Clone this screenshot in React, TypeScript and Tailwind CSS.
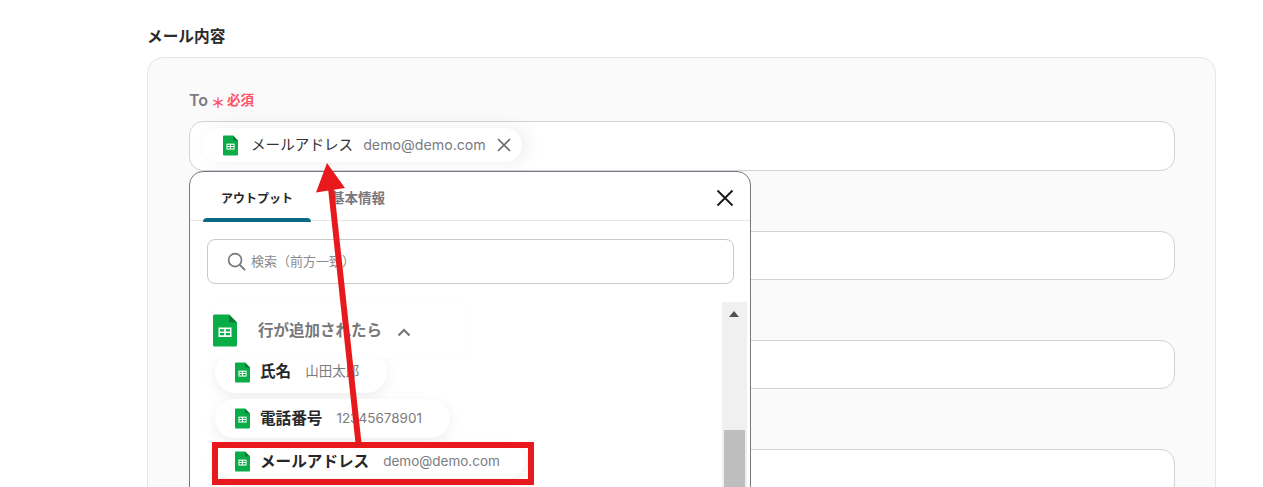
import React from "react";

const FONT = "font-['Inter','Noto_Sans_CJK_JP',sans-serif]";

function Sheet({ className }: { className: string }) {
  return (
    <svg viewBox="0 0 24 32" className={className} aria-hidden="true">
      <path d="M1.5 0H16l8 8v22.5a1.5 1.5 0 0 1-1.5 1.5h-21A1.5 1.5 0 0 1 0 30.500V1.500A1.500 1.500 0 0 1 1.500 0Z" fill="#0AAC48" />
      <path d="M16 0l8 8h-6.500A1.500 1.500 0 0 1 16 6.500Z" fill="#0A7A3A" />
      <path d="M5.500 13h13v9.500h-13Z" fill="#fff" />
      <path d="M7 14.800h4.200v2.100H7ZM12.800 14.800H17v2.100h-4.200ZM7 18.500h4.200v2.300H7ZM12.800 18.500H17v2.300h-4.200Z" fill="#0AAC48" />
    </svg>
  );
}

function Field({ className = "" }: { className?: string }) {
  return <div className={`rounded-[14px] border border-[#cfd3dc] bg-white ${className}`} />;
}

function Pill({ name, value, className }: { name: string; value: string; className: string }) {
  return (
    <div className={`flex items-center rounded-full bg-white pl-5 shadow-[0_4px_14px_rgba(0,0,0,0.07)] ${className}`}>
      <Sheet className="h-[21px] w-[15px] shrink-0" />
      <span className="ml-[10px] text-[15.600px] font-bold leading-none text-[#27272a]">{name}</span>
      <span className="ml-[14px] text-[13.500px] leading-none text-[#7b7b80]">{value}</span>
    </div>
  );
}

export default function App() {
  return (
    <div className={`relative h-[487px] w-[1263px] overflow-hidden bg-white ${FONT}`}>
      <div className="pl-[147px] pr-[47px] pt-[26px]">
        <h2 className="h-[31px] text-[15.700px] font-semibold leading-[22px] text-[#2b2b2b]">メール内容</h2>
        <section className="h-[500px] rounded-t-[16px] border border-[#e5e6e9] bg-[#fafafb] pl-[41px] pr-[40px] pt-[31px]">
          <div className="flex h-[22px] items-center">
            <span className="text-[16px] font-semibold text-[#7c7c80]">To</span>
            <span className="ml-[3px] mt-[5px] text-[14px] font-bold leading-none text-[#ff5268]">＊</span>
            <span className="ml-[2px] text-[13.500px] font-bold text-[#ff5268]">必須</span>
          </div>
          <div className="relative mt-[10px] flex h-[50px] items-center rounded-[14px] border border-[#cfd3dc] bg-white pb-[2px] pl-[12px]">
            <div className="flex h-[34px] w-[320px] items-center rounded-full bg-white pl-[21px] shadow-[6px_0_18px_rgba(0,0,0,0.07)]">
              <Sheet className="h-[21px] w-[15px] shrink-0" />
              <span className="ml-[13px] text-[14.600px] leading-none text-[#333336]">メールアドレス</span>
              <span className="ml-[10px] text-[14.200px] leading-none text-[#7b7b80]">demo@demo.com</span>
              <svg viewBox="0 0 14 14" className="ml-[11px] h-[14px] w-[14px]" aria-hidden="true">
                <path d="M1 1l12 12M13 1L1 13" stroke="#69696d" strokeWidth="1.700" fill="none" />
              </svg>
            </div>
          </div>
          <Field className="mt-[60px] h-[49px]" />
          <Field className="mt-[60px] h-[49px]" />
          <Field className="mt-[60px] h-[49px]" />
        </section>
      </div>

      {/* output picker */}
      <div className="absolute left-[189px] top-[171px] isolate h-[340px] w-[562px] rounded-t-[14px] border border-[#77787c] bg-white">
        <div className="relative flex h-[49px] border-b border-[#e6e6e6] pl-[13px]">
          <div className="relative flex h-[49px] w-[108px] items-center justify-center pt-[4px] text-[12px] font-bold text-[#27272a]">
            アウトプット
            <span className="absolute bottom-[-1px] left-0 h-[4px] w-full rounded-t-[4px] bg-[#0b6a83]" />
          </div>
          <div className="ml-[20px] flex h-[49px] items-center pt-[4px] text-[13.500px] font-semibold text-[#77777c]">基本情報</div>
          <svg viewBox="0 0 18 18" className="absolute right-[16px] top-[17px] h-[18px] w-[18px]" aria-hidden="true">
            <path d="M1.500 1.500l15 15M16.500 1.500l-15 15" stroke="#1a1a1a" strokeWidth="1.900" fill="none" />
          </svg>
        </div>
        <div className="ml-[17px] mr-[16px] mt-[18px] flex h-[45px] items-center rounded-[8px] border border-[#c9c9cc] pl-[19px]">
          <svg viewBox="0 0 20 20" className="h-[19px] w-[19px]" aria-hidden="true">
            <circle cx="8.500" cy="8.500" r="6.800" stroke="#77777c" strokeWidth="1.800" fill="none" />
            <path d="M13.500 13.500l5.500 5.500" stroke="#77777c" strokeWidth="2" fill="none" />
          </svg>
          <span className="ml-[5px] text-[13px] text-[#8a8a8e]">検索（前方一致）</span>
        </div>
        <div className="relative mt-[18px] h-[200px] pl-[23px]">
          <div className="relative z-10 flex h-[56px] w-[252px] items-center bg-white pt-[1px] shadow-[0_0_6px_rgba(0,0,0,0.015)]">
            <Sheet className="h-[33px] w-[24px] shrink-0" />
            <span className="ml-[21px] text-[15.500px] font-semibold text-[#77777c]">行が追加されたら</span>
            <svg viewBox="0 0 14 9" className="ml-[15px] mt-[3px] h-[9px] w-[14px]" aria-hidden="true">
              <path d="M1.500 7.500L7 2l5.500 5.500" stroke="#77777c" strokeWidth="2.200" fill="none" />
            </svg>
          </div>
          <div className="absolute right-[3px] top-0 h-[200px] w-[25px] bg-[#f0f0f0]">
            <span className="absolute left-[7px] top-[9px] h-0 w-0 border-x-[5.500px] border-b-[6px] border-x-transparent border-b-[#505050]" />
            <span className="absolute left-[2px] top-[128px] h-[72px] w-[21px] bg-[#bebebe]" />
          </div>
          <div className="absolute left-[25px] top-[49px] flex flex-col gap-[6px]">
            <Pill name="氏名" value="山田太郎" className="h-[42px] w-[172px]" />
            <Pill name="電話番号" value="12345678901" className="h-[39px] w-[235px]" />
            <Pill name="メールアドレス" value="demo@demo.com" className="h-[34px] w-[310px] pt-[1px]" />
          </div>
        </div>
      </div>

      {/* annotation */}
      <div className="absolute left-[212px] top-[442px] h-[43px] w-[322px] border-[6px] border-[#e8191c]" />
      <svg viewBox="0 0 1263 487" className="absolute inset-0 h-[487px] w-[1263px]" aria-hidden="true">
        <path d="M358.500 443L331 188" stroke="#e8191c" strokeWidth="6" fill="none" />
        <path d="M327 163L316 192.500L345 188Z" fill="#e8191c" />
      </svg>
    </div>
  );
}
